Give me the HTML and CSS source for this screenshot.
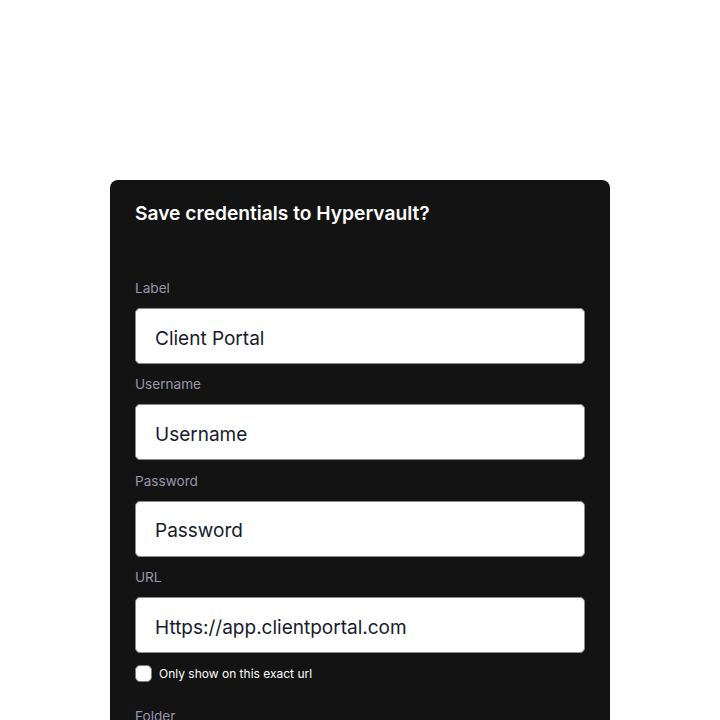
FILE: index.html
```html
<!DOCTYPE html>
<html lang="en">
<head>
<meta charset="utf-8">
<title>Save credentials</title>
<link rel="stylesheet" href="styles.css">
</head>
<body>
<main class="page">
  <section class="card">
    <h1 class="title">Save credentials to Hypervault?</h1>
    <form class="form">
      <div class="field">
        <label class="label">Label</label>
        <div class="input">Client Portal</div>
      </div>
      <div class="field">
        <label class="label">Username</label>
        <div class="input">Username</div>
      </div>
      <div class="field">
        <label class="label">Password</label>
        <div class="input">Password</div>
      </div>
      <div class="field">
        <label class="label">URL</label>
        <div class="input">Https://app.clientportal.com</div>
      </div>
      <div class="check-row">
        <span class="checkbox"></span>
        <span class="check-text">Only show on this exact url</span>
      </div>
      <div class="field folder">
        <label class="label">Folder</label>
        <div class="input"></div>
      </div>
    </form>
  </section>
</main>
</body>
</html>
```

FILE: styles.css
```css
html, body {
  margin: 0;
  padding: 0;
  background: #ffffff;
  font-family: Inter, "Noto Sans", "Liberation Sans", sans-serif;
  height: 720px;
  overflow: hidden;
}
.page {
  padding-top: 180px;
  display: flex;
  justify-content: center;
}
.card {
  width: 500px;
  box-sizing: border-box;
  background: #131313;
  border-radius: 8px;
  padding: 22px 25px 40px 25px;
}
.title {
  margin: 0;
  color: #ffffff;
  font-size: 19.2px;
  line-height: 22px;
  font-weight: 600;
}
.form {
  margin-top: 56px;
  display: flex;
  flex-direction: column;
}
.field {
  display: flex;
  flex-direction: column;
  margin-bottom: 12.4px;
}
.label {
  color: #9995ab;
  font-size: 13.6px;
  line-height: 17px;
  margin-bottom: 11px;
}
.input {
  height: 56px;
  box-sizing: border-box;
  background: #ffffff;
  border: 1px solid #8a8a8a;
  border-radius: 5px;
  padding: 4px 19px 0 19px;
  display: flex;
  align-items: center;
  color: #161a2e;
  font-size: 19px;
}
.check-row {
  display: flex;
  align-items: center;
  gap: 7px;
  margin-top: -1px;
  margin-bottom: 26px;
}
.checkbox {
  width: 17px;
  height: 17px;
  box-sizing: border-box;
  background: #ffffff;
  border: 1px solid #7a7a7a;
  border-radius: 5px;
}
.check-text {
  color: #ffffff;
  font-size: 12px;
  line-height: 17px;
}
```
